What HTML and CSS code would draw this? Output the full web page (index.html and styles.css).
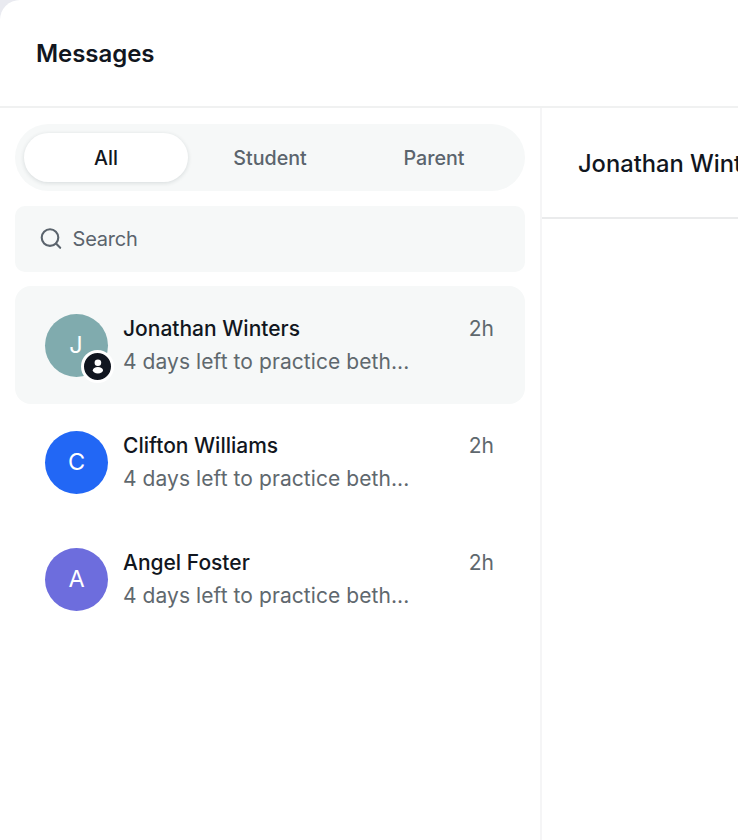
FILE: index.html
```html
<!DOCTYPE html>
<html lang="en">
<head>
<meta charset="utf-8">
<title>Messages</title>
<link rel="stylesheet" href="styles.css">
</head>
<body>
<div class="app">
  <header class="header"><h1>Messages</h1></header>
  <div class="body">
    <aside class="sidebar">
      <div class="tabs">
        <div class="tab active">All</div>
        <div class="tab">Student</div>
        <div class="tab">Parent</div>
      </div>
      <div class="search">
        <svg width="22" height="22" viewBox="0 0 22 22" fill="none" stroke="#5b646d" stroke-width="2.1" stroke-linecap="round"><circle cx="10" cy="9.6" r="8.3"/><path d="M16 15.6 20.2 19.8"/></svg>
        <span>Search</span>
      </div>
      <div class="row selected">
        <div class="avatar teal"><span class="initial-j">J</span>
          <span class="badge"><svg width="27" height="27" viewBox="0 0 27 27" fill="#fff"><circle cx="13.9" cy="9.8" r="3.3"/><ellipse cx="13.9" cy="17.3" rx="5.1" ry="3.2"/></svg></span>
        </div>
        <div class="info"><div class="name">Jonathan Winters</div><div class="preview">4 days left to practice beth...</div></div>
        <div class="time">2h</div>
      </div>
      <div class="row">
        <div class="avatar blue">C</div>
        <div class="info"><div class="name">Clifton Williams</div><div class="preview">4 days left to practice beth...</div></div>
        <div class="time">2h</div>
      </div>
      <div class="row">
        <div class="avatar purple">A</div>
        <div class="info"><div class="name">Angel Foster</div><div class="preview">4 days left to practice beth...</div></div>
        <div class="time">2h</div>
      </div>
    </aside>
    <main class="main"><h2>Jonathan Winters</h2></main>
  </div>
</div>
</body>
</html>
```
FILE: styles.css
```css
* { box-sizing: border-box; }
body { margin: 0; background: #e9eaf0; font-family: Inter, sans-serif; color: #111620; overflow: hidden; }
.app { height: 840px; background: #fff; border-top-left-radius: 20px; display: flex; flex-direction: column; overflow: hidden; }
.header { height: 108px; flex: none; border-bottom: 2px solid #f0f1f1; padding: 2px 36px 0; display: flex; align-items: center; }
h1 { margin: 0; font-size: 24px; font-weight: 600; line-height: 32px; letter-spacing: -0.05px; }
.body { flex: 1; display: flex; }
.sidebar { width: 542px; flex: none; border-right: 2px solid #f5f5f6; padding: 16px 15px; }
.tabs { height: 67px; border-radius: 34px; background: #f6f8f8; padding: 9px; display: flex; }
.tab { flex: 1; display: flex; align-items: center; justify-content: center; font-size: 19.7px; font-weight: 500; color: #5b646d; border-radius: 25px; }
.tab.active { background: #fff; color: #111620; box-shadow: 0 1px 4px rgba(20, 40, 50, .14); }
.search { height: 66px; margin-top: 15px; border-radius: 10px; background: #f6f8f8; display: flex; align-items: center; gap: 10.5px; padding: 0 25px; font-size: 20px; letter-spacing: -0.2px; color: #5b646d; }
.row { height: 117px; display: flex; padding: 28px 31px 0 30px; border-radius: 16px; }
.row.selected { background: #f6f8f8; height: 118px; margin-top: 14px; margin-bottom: -1px; }
.avatar { position: relative; width: 63px; height: 63px; margin-top: -0.5px; flex: none; border-radius: 50%; color: #fff; font-size: 23.5px; line-height: 61px; display: flex; justify-content: center; }
.initial-j { margin-right: 1px; }
.teal { background: #80abae; }
.blue { background: #2267f5; }
.purple { background: #6d6ddd; }
.badge { position: absolute; left: 36px; top: 36px; width: 33px; height: 33px; border: 3px solid #fff; border-radius: 50%; background: #111620; }
.badge svg { display: block; }
.info { flex: 1; margin-left: 15px; }
.name { font-size: 21px; font-weight: 500; line-height: 30px; }
.preview { font-size: 21px; color: #5f686e; line-height: 36px; letter-spacing: 0.07px; white-space: nowrap; }
.time { font-size: 21px; color: #5f686e; line-height: 30px; }
.main { flex: 1; min-width: 0; }
h2 { margin: 0; height: 111px; padding-left: 36px; border-bottom: 2px solid #eaebec; font-size: 23.7px; font-weight: 500; line-height: 111px; white-space: nowrap; overflow: hidden; }
```
